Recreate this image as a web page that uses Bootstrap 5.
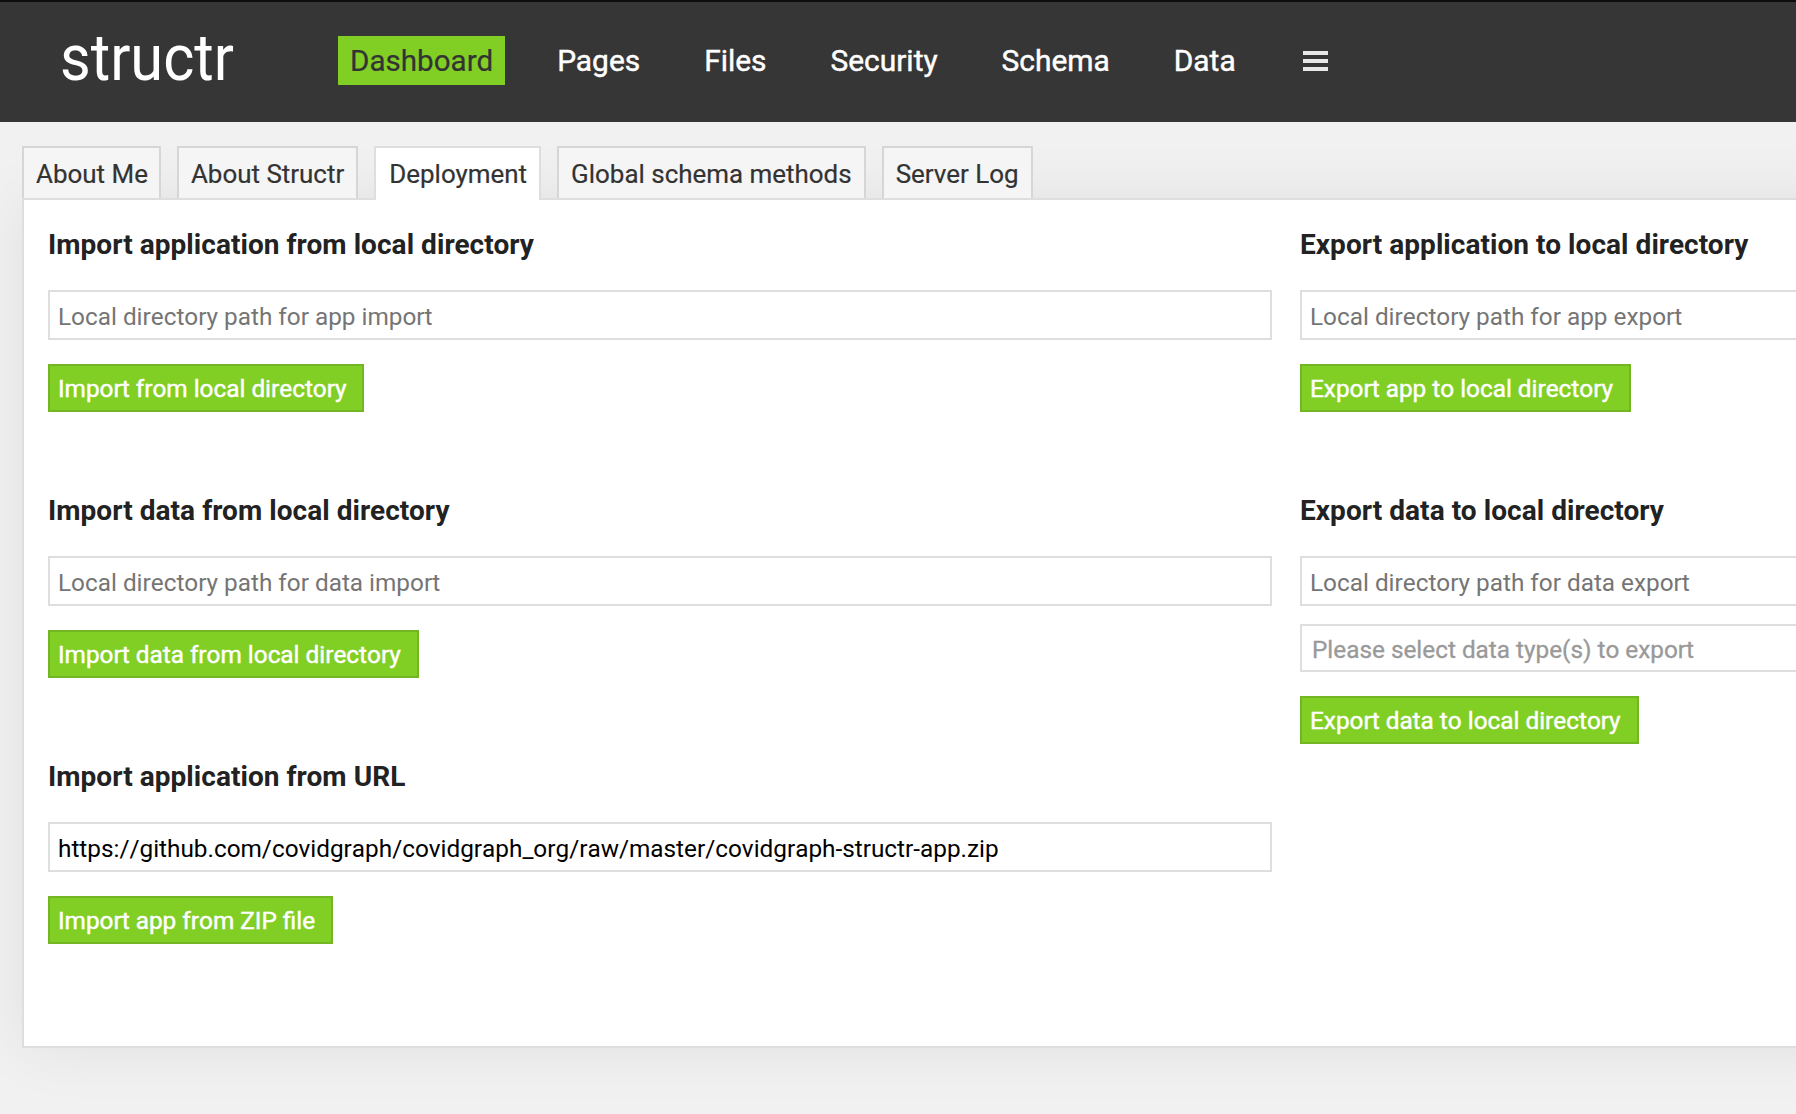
<!DOCTYPE html>
<html lang="en">
<head>
<meta charset="utf-8">
<meta name="viewport" content="width=device-width, initial-scale=1">
<title>Structr – Dashboard</title>
<link href="https://cdn.jsdelivr.net/npm/bootstrap@5.3.0/dist/css/bootstrap.min.css" rel="stylesheet">
<style>
  body { font-family: Roboto, "Liberation Sans", sans-serif; background: #f1f1f1; color: #333; height: 1114px; overflow: hidden; }
  .topbar { height: 122px; background: #363636; border-top: 2px solid #0d0d0d; padding: 34px 0 0 60px; position: relative; z-index: 2; }
  .logo { width: 278px; height: 49px; overflow: visible; }
  .main-menu { gap: 40px; flex-wrap: nowrap; }
  .main-menu .nav-link { height: 49px; line-height: 49px; padding: 0 12px; font-size: 29.9px; font-weight: 400; -webkit-text-stroke: .45px #fff; color: #fff; border-radius: 0; white-space: nowrap; }
  .main-menu .nav-link.active { background: #81ce25; color: #333; font-size: 29.6px; padding-top: 1px; -webkit-text-stroke: .2px #333; }
  .burger { margin-left: 15px; margin-top: 13px; display: block; }
  .sub-menu { padding: 24px 0 0 22px; height: 78px; gap: 16px; border: 0; flex-wrap: nowrap; position: relative; z-index: 1; }
  .sub-menu .nav-link { height: 52px; line-height: 50px; padding: 1px 12px 0; margin: 0; font-size: 25.95px; -webkit-text-stroke: .2px #333; color: #333; background: #f5f5f5; border: 2px solid #d6d6d6; border-bottom: 0; border-radius: 0; white-space: nowrap; }
  .sub-menu .nav-link:first-child { padding-right: 11px; }
  .sub-menu .nav-link.active { height: 54px; padding-left: 13px; background: #fff; color: #333; border-color: #dedede; }
  .panel { margin: -2px 0 0 22px; width: 2600px; height: 850px; background: #fff; border: 2px solid #dedede; padding: 28px 24px; gap: 28px; box-shadow: 0 0 60px rgba(0,0,0,.07); }
  .pane { width: 1224px; flex: none; }
  .task { margin-bottom: 82px; }
  .task h3 { font-size: 28px; line-height: 32px; font-weight: 700; letter-spacing: .05px; color: #222; margin: 0 0 29px; padding-top: 1px; }
  .task .form-control { height: 50px; padding: 2px 8px 0; font-size: 24.34px; line-height: 44px; border: 2px solid #dedede; border-radius: 0; color: #000; font-kerning: none; }
  .task .form-control::placeholder { color: #757575; opacity: 1; }
  .task .type-select { height: 48px; margin-top: 18px; padding: 2px 10px 0; color: #999; -webkit-text-stroke: .3px #999; }
  .task .btn { height: 48px; margin-top: 24px; padding: 1px 16px 0 8px; font-size: 24.34px; line-height: 44px; font-weight: 400; font-kerning: none; -webkit-text-stroke: .45px #fff; color: #fff; background: #81ce25; border: 2px solid #73b522; border-radius: 0; display: block; text-align: left; }
</style>
<script src="https://cdn.jsdelivr.net/npm/bootstrap@5.3.0/dist/js/bootstrap.bundle.min.js"></script>
</head>
<body>
<header class="topbar d-flex align-items-start">
  <svg class="logo flex-shrink-0" viewBox="0 0 278 49" role="img" aria-label="structr">
    <text x="0" y="44" font-family="Roboto, sans-serif" font-size="65" font-weight="400" fill="#fff" textLength="174" lengthAdjust="spacingAndGlyphs">structr</text>
  </svg>
  <nav class="nav main-menu">
    <a class="nav-link active" href="#">Dashboard</a>
    <a class="nav-link" href="#">Pages</a>
    <a class="nav-link" href="#">Files</a>
    <a class="nav-link" href="#">Security</a>
    <a class="nav-link" href="#">Schema</a>
    <a class="nav-link" href="#">Data</a>
    <a class="burger" href="#" aria-label="More"><svg class="d-block" width="25" height="24" viewBox="0 0 25 24" fill="#e8e8e8"><path d="M0 2h25v4H0zM0 10h25v4H0zM0 18h25v4H0z"/></svg></a>
  </nav>
</header>
<nav class="nav nav-tabs sub-menu">
  <a class="nav-link" href="#">About Me</a>
  <a class="nav-link" href="#">About Structr</a>
  <a class="nav-link active" href="#">Deployment</a>
  <a class="nav-link" href="#">Global schema methods</a>
  <a class="nav-link" href="#">Server Log</a>
</nav>
<main class="panel d-flex">
  <section class="pane">
    <div class="task">
      <h3>Import application from local directory</h3>
      <input class="form-control" type="text" placeholder="Local directory path for app import">
      <button class="btn" type="button">Import from local directory</button>
    </div>
    <div class="task">
      <h3>Import data from local directory</h3>
      <input class="form-control" type="text" placeholder="Local directory path for data import">
      <button class="btn" type="button">Import data from local directory</button>
    </div>
    <div class="task">
      <h3>Import application from URL</h3>
      <input class="form-control" type="text" value="https://github.com/covidgraph/covidgraph_org/raw/master/covidgraph-structr-app.zip">
      <button class="btn" type="button">Import app from ZIP file</button>
    </div>
  </section>
  <section class="pane">
    <div class="task">
      <h3>Export application to local directory</h3>
      <input class="form-control" type="text" placeholder="Local directory path for app export">
      <button class="btn" type="button">Export app to local directory</button>
    </div>
    <div class="task">
      <h3>Export data to local directory</h3>
      <input class="form-control" type="text" placeholder="Local directory path for data export">
      <div class="form-control type-select">Please select data type(s) to export</div>
      <button class="btn" type="button">Export data to local directory</button>
    </div>
  </section>
</main>
</body>
</html>
